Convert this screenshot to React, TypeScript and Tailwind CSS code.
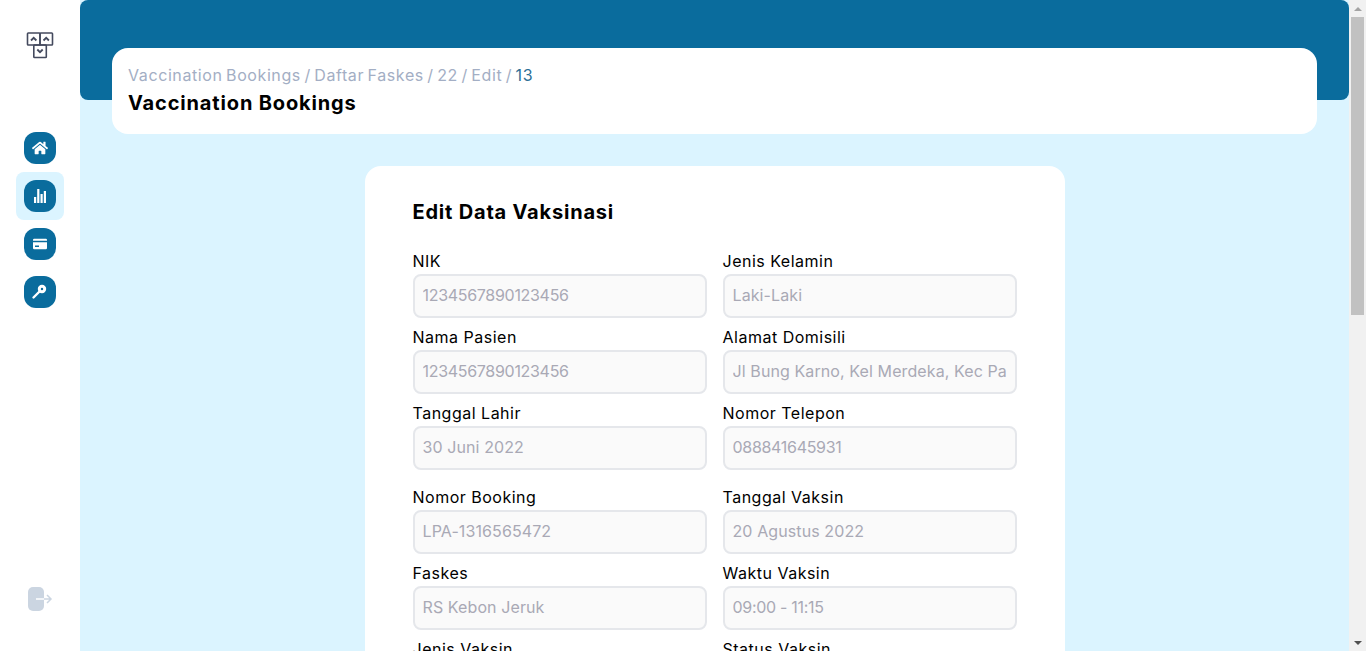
import { FaHome } from "react-icons/fa";

const font = "font-['Inter','Liberation_Sans',sans-serif]";

const groups = [
  [
    ["NIK", "1234567890123456", "Jenis Kelamin", "Laki-Laki"],
    ["Nama Pasien", "1234567890123456", "Alamat Domisili", "Jl Bung Karno, Kel Merdeka, Kec Pasar Baru"],
    ["Tanggal Lahir", "30 Juni 2022", "Nomor Telepon", "088841645931"],
  ],
  [
    ["Nomor Booking", "LPA-1316565472", "Tanggal Vaksin", "20 Agustus 2022"],
    ["Faskes", "RS Kebon Jeruk", "Waktu Vaksin", "09:00 - 11:15"],
    ["Jenis Vaksin", "Sinovac", "Status Vaksin", "Terjadwal"],
  ],
];

function Logo() {
  return (
    <svg width="28" height="28" viewBox="0 0 28 28" fill="none" stroke="#444a5e" strokeWidth="1.6">
      <rect x="1.5" y="2" width="12.5" height="12" rx="0.8" />
      <rect x="14" y="2" width="12.5" height="12" rx="0.8" />
      <rect x="7.800" y="14" width="12.500" height="12.500" rx="0.8" />
      <path d="M5 9.500l2.700-2.700 2.700 2.700M17.500 9.500l2.700-2.700 2.700 2.700M11.300 18.500l2.700 2.700 2.700-2.700" strokeWidth="1.800" />
    </svg>
  );
}

function Bars() {
  return (
    <svg width="14" height="14" viewBox="0 0 14 14" fill="white">
      <rect x="1" y="8" width="2.200" height="6" />
      <rect x="4.200" y="0" width="2.200" height="14" />
      <rect x="7.500" y="5" width="2.200" height="9" />
      <rect x="10.800" y="2" width="2.200" height="12" />
    </svg>
  );
}

function Card() {
  return (
    <svg width="14" height="12" viewBox="0 0 14 12">
      <path d="M1.500 0.700h11A1.300 1.300 0 0 1 14 2V2.700H0V2A1.300 1.300 0 0 1 1.500 0.700z" fill="white" />
      <path d="M0 4.300h14v5.700A1.300 1.300 0 0 1 12.500 11.300h-11A1.300 1.300 0 0 1 0 10z" fill="white" />
      <rect x="2" y="7.500" width="4" height="1.500" fill="#0a6c9d" />
    </svg>
  );
}

function Key() {
  return (
    <svg width="32" height="32" viewBox="0 0 32 32" fill="none">
      <circle cx="18" cy="13" r="2.700" stroke="white" strokeWidth="3" />
      <path d="M15.500 15.500L9.500 21.500" stroke="white" strokeWidth="2.400" strokeLinecap="round" />
    </svg>
  );
}

function NavIcon({ children }: { children: React.ReactNode }) {
  return (
    <div className="flex h-8 w-8 items-center justify-center rounded-xl bg-[#0a6c9d] text-white">{children}</div>
  );
}

function Field({ label, value }: { label: string; value: string }) {
  // digits run wider in this font than in the original, so pull them in a little
  const numeric = /^[\d:\s-]+$/.test(value);
  return (
    <div className="min-w-0">
      <label className="block h-6 text-base leading-[22px] tracking-[0.5px] text-black">{label}</label>
      <input
        readOnly
        value={value}
        className={`h-11 w-full rounded-lg border-2 border-[#e5e7eb] bg-[#fafafa] px-2 pb-[2px] text-base text-[#a9a9b5] outline-none ${
          numeric ? "tracking-[-0.3px]" : "tracking-[0.1px]"
        }`}
      />
    </div>
  );
}

export default function App() {
  return (
    <div className={`flex h-[651px] w-full overflow-hidden bg-white ${font}`}>
      <aside className="flex w-20 shrink-0 flex-col items-center pt-[31px] pb-[40px]">
        <Logo />
        <nav className="mt-[73px] flex flex-col items-center gap-4">
          <NavIcon>
            <FaHome size={16} />
          </NavIcon>
          <div className="-my-2 flex h-12 w-12 items-center justify-center rounded-lg bg-[#dbf4ff]">
            <NavIcon>
              <Bars />
            </NavIcon>
          </div>
          <NavIcon>
            <Card />
          </NavIcon>
          <NavIcon>
            <Key />
          </NavIcon>
        </nav>
        <svg className="mt-auto" width="26" height="24" viewBox="0 0 26 24" fill="none">
          <rect x="1" y="0" width="16" height="24" rx="5" fill="#cbd5e1" />
          <path d="M9 12h15M20 8l4 4-4 4" stroke="#cbd5e1" strokeWidth="1.500" />
          <path d="M9 12h8" stroke="white" strokeWidth="1.500" />
        </svg>
      </aside>

      <main className="min-w-0 flex-1 bg-[#dbf4ff]">
        <div className="h-[100px] rounded-lg bg-[#0a6c9d]" />
        <div className="mx-8 -mt-[52px] h-[86px] rounded-2xl bg-white px-4 pt-[15px]">
          <div className="text-base leading-6 tracking-[0.6px] text-[#a3aec4] [word-spacing:-1.6px]">
            Vaccination Bookings / Daftar Faskes / 22 / Edit / <span className="text-[#2d6f96]">13</span>
          </div>
          <h1 className="mt-[2px] text-xl leading-7 font-bold tracking-[0.85px] text-black">Vaccination Bookings</h1>
        </div>
        <section className="mx-auto mt-8 w-[700px] rounded-2xl bg-white px-12 pt-8 pb-12">
          <h2 className="text-xl leading-7 font-bold tracking-[0.8px] text-black">Edit Data Vaksinasi</h2>
          <div className="mt-6 flex flex-col gap-4">
            {groups.map((rows, i) => (
              <div key={i} className="flex flex-col gap-2">
                {rows.map(([a, av, b, bv]) => (
                  <div key={a} className="grid grid-cols-2 gap-4">
                    <Field label={a} value={av} />
                    <Field label={b} value={bv} />
                  </div>
                ))}
              </div>
            ))}
          </div>
        </section>
      </main>

      <div className="flex w-[17px] shrink-0 flex-col items-center bg-[#f1f1f1]">
        <div className="flex h-[17px] items-center justify-center">
          <div className="h-0 w-0 border-x-[4px] border-b-[4px] border-x-transparent border-b-[#a3a3a3]" />
        </div>
        <div className="h-[298px] w-[13px] bg-[#c1c1c1]" />
        <div className="mt-auto flex h-[17px] items-center justify-center">
          <div className="h-0 w-0 border-x-[4px] border-t-[4px] border-x-transparent border-t-[#505050]" />
        </div>
      </div>
    </div>
  );
}
